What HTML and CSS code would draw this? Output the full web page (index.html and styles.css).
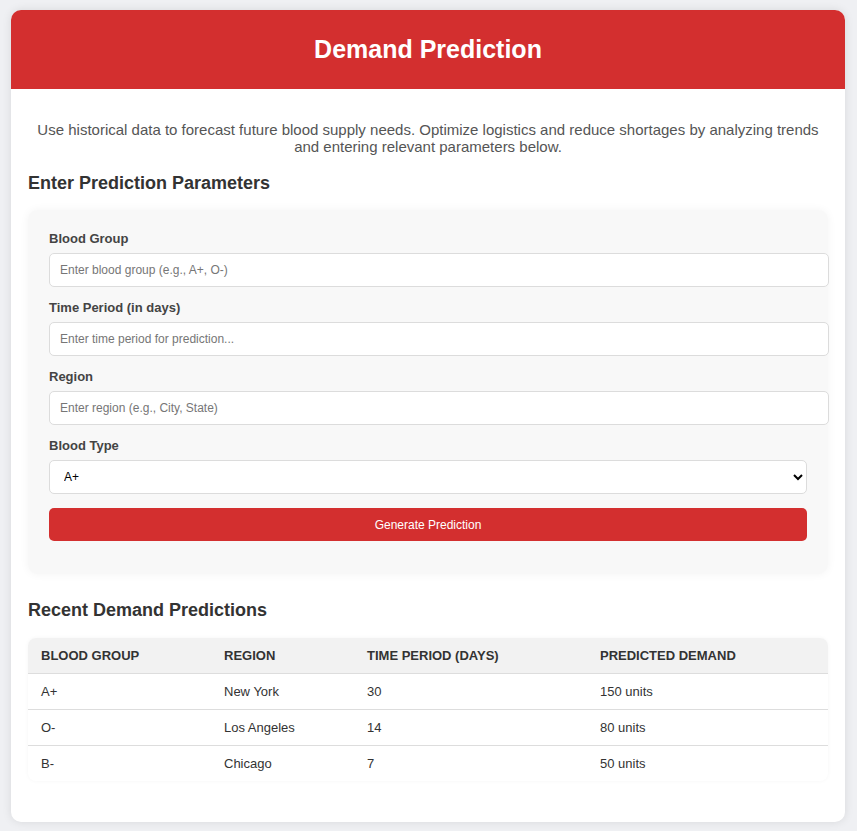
FILE: index.html
```html
<!DOCTYPE html>
<html lang="en">
<head>
<meta charset="utf-8">
<title>Demand Prediction</title>
<link rel="stylesheet" href="styles.css">
</head>
<body>
<div class="card">
  <header class="card-header">
    <h1 class="title">Demand Prediction</h1>
  </header>
  <div class="card-body">
    <p class="intro">Use historical data to forecast future blood supply needs. Optimize logistics and reduce shortages by analyzing trends and entering relevant parameters below.</p>
    <h2 class="section-title">Enter Prediction Parameters</h2>
    <form class="panel">
      <label class="field-label" for="bg">Blood Group</label>
      <input class="field-input" id="bg" type="text" placeholder="Enter blood group (e.g., A+, O-)">
      <label class="field-label" for="tp">Time Period (in days)</label>
      <input class="field-input" id="tp" type="text" placeholder="Enter time period for prediction...">
      <label class="field-label" for="rg">Region</label>
      <input class="field-input" id="rg" type="text" placeholder="Enter region (e.g., City, State)">
      <label class="field-label" for="bt">Blood Type</label>
      <select class="field-select" id="bt">
        <option>A+</option>
        <option>A-</option>
        <option>B+</option>
        <option>B-</option>
        <option>O+</option>
        <option>O-</option>
        <option>AB+</option>
        <option>AB-</option>
      </select>
      <button class="submit-btn" type="button">Generate Prediction</button>
    </form>
    <h2 class="section-title recent-title">Recent Demand Predictions</h2>
    <table class="data-table">
      <colgroup>
        <col class="col-1"><col class="col-2"><col class="col-3"><col class="col-4">
      </colgroup>
      <thead>
        <tr><th>Blood Group</th><th>Region</th><th>Time Period (Days)</th><th>Predicted Demand</th></tr>
      </thead>
      <tbody>
        <tr><td>A+</td><td>New York</td><td>30</td><td>150 units</td></tr>
        <tr><td>O-</td><td>Los Angeles</td><td>14</td><td>80 units</td></tr>
        <tr><td>B-</td><td>Chicago</td><td>7</td><td>50 units</td></tr>
      </tbody>
    </table>
  </div>
</div>
</body>
</html>
```
FILE: styles.css
```css
* { box-sizing: content-box; }

html, body {
  margin: 0;
  background: #eff0f3;
}

body {
  padding: 10px 12px 9px 11px;
  font-family: "Liberation Sans", Arial, Helvetica, sans-serif;
  color: #333;
}

.card {
  background: #ffffff;
  border-radius: 10px;
  box-shadow: 0 0 10px rgba(0, 0, 0, 0.1);
  overflow: hidden;
}

.card-header {
  background: #d32f2f;
  padding: 25px 20px;
  text-align: center;
}

.title {
  margin: 0;
  color: #ffffff;
  font-size: 25px;
  line-height: 29px;
  font-weight: bold;
}

.card-body {
  padding: 0 17px 41px;
}

.intro {
  margin: 32px 0 0;
  font-size: 15px;
  line-height: 17px;
  color: #555;
  text-align: center;
}

.section-title {
  margin: 18px 0 16px;
  font-size: 18px;
  line-height: 21px;
  font-weight: bold;
  color: #333;
}

.recent-title {
  margin: 26px 0 17px;
}

.panel {
  display: flex;
  flex-direction: column;
  align-items: flex-start;
  background: #f8f8f8;
  border-radius: 10px;
  padding: 20px 21px 20px 21px;
  box-shadow: 0 0 10px rgba(0, 0, 0, 0.05);
}

.field-label {
  display: block;
  font-size: 13px;
  line-height: 17px;
  font-weight: bold;
  color: #444;
  margin-bottom: 6px;
}

.field-input {
  display: block;
  width: 100%;
  height: 14px;
  padding: 9px 10px;
  margin: 0 0 12px;
  border: 1px solid #dcdcdc;
  border-radius: 5px;
  background: #ffffff;
  font-family: "Liberation Sans", Arial, sans-serif;
  font-size: 12px;
  line-height: 14px;
  color: #333;
  outline: none;
}

.field-input::placeholder {
  color: #767676;
}

.field-select {
  display: block;
  box-sizing: border-box;
  width: 100%;
  height: 34px;
  margin: 0 0 14px;
  padding: 0 8px 0 10px;
  border: 1px solid #dcdcdc;
  border-radius: 5px;
  background: #ffffff;
  font-family: "Liberation Sans", Arial, sans-serif;
  font-size: 12px;
  color: #000;
}

.submit-btn {
  display: block;
  box-sizing: border-box;
  width: 100%;
  height: 33px;
  margin: 0 0 13px;
  border: none;
  border-radius: 5px;
  background: #d32f2f;
  color: #ffffff;
  font-family: "Liberation Sans", Arial, sans-serif;
  font-size: 12px;
  cursor: pointer;
}

.data-table {
  width: 100%;
  table-layout: fixed;
  border-collapse: separate;
  border-spacing: 0;
  border-radius: 8px;
  overflow: hidden;
  box-shadow: 0 0 4px rgba(0, 0, 0, 0.04);
  font-size: 13px;
  line-height: 15px;
}

.col-1 { width: 183px; }
.col-2 { width: 143px; }
.col-3 { width: 233px; }
.col-4 { width: 241px; }

.data-table th,
.data-table td {
  padding: 10px 12px 10px 13px;
  text-align: left;
  border-bottom: 1px solid #dddddd;
  color: #333;
}

.data-table th {
  background: #f2f2f2;
  font-weight: bold;
  text-transform: uppercase;
}

.data-table td {
  font-weight: normal;
}

.data-table tbody tr:last-child td {
  border-bottom: none;
}
```
